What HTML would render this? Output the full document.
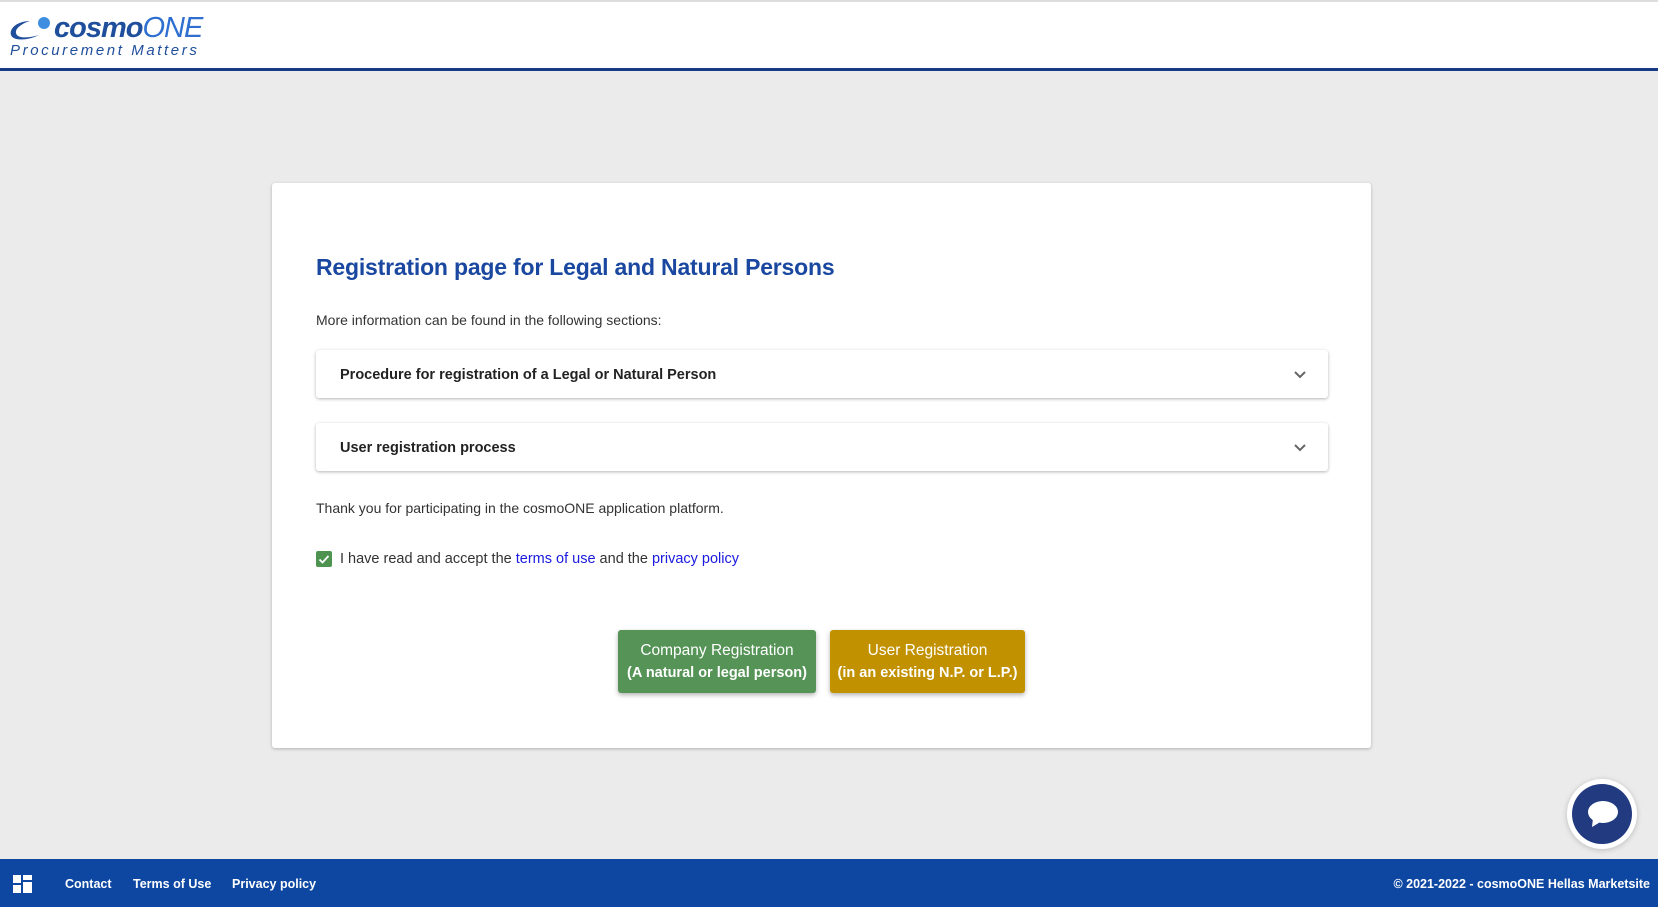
<!DOCTYPE html>
<html><head><meta charset="utf-8"><style>
*{box-sizing:border-box;margin:0;padding:0}
body{width:1658px;height:907px;overflow:hidden;background:#ebebeb;font-family:"Liberation Sans",Arial,sans-serif;position:relative;color:#222}
.hdr{position:absolute;left:0;top:0;width:1658px;height:71px;background:#fff;border-top:2px solid #ddd;border-bottom:3px solid #163a86}
.card{position:absolute;left:272px;top:183px;width:1099px;height:565px;background:#fff;border-radius:3px;box-shadow:0 1px 3px rgba(0,0,0,.25)}
.abs{position:absolute}
h1{position:absolute;left:44px;top:71px;font-size:23px;color:#1a47a0;font-weight:bold;letter-spacing:-0.2px}
.t{position:absolute;left:44px;font-size:14px;color:#333}
.acc{position:absolute;left:44px;width:1012px;height:48px;background:#fff;box-shadow:0 1px 3px rgba(0,0,0,.3);border-radius:3px;font-size:14.5px;font-weight:bold;color:#222;padding:17px 0 0 24px}
.acc svg{position:absolute;right:22px;top:21px}
.btn{position:absolute;top:447px;height:63px;color:#fff;text-align:center;border-radius:3px;box-shadow:0 2px 5px rgba(0,0,0,.3);font-size:15.5px;line-height:22px;padding-top:10px}
.btn b{font-size:14.5px}
.ftr{position:absolute;left:0;top:859px;width:1658px;height:48px;background:#0d47a1;color:#fff;font-size:12.5px;font-weight:bold}
.ftr span{position:absolute;top:18px}
a{color:#1a1ae0;text-decoration:none}
</style></head><body>
<div class="hdr">
<svg class="abs" style="left:8px;top:13px" width="44" height="30" viewBox="0 0 44 30"><path d="M22 6C10 6 1 13 3 20c2 6 16 6 28 0-10 3-22 4-23-2-1-5 7-10 14-12z" fill="#1f4e9c"/><circle cx="36" cy="8" r="6" fill="#3d8ee0"/></svg>
<div class="abs" style="left:54px;top:10px;font-size:29px;font-style:italic;color:#1f4e9c;letter-spacing:-1px"><b>cosmo</b><span style="color:#2e6fd0">ONE</span></div>
<div class="abs" style="left:10px;top:40px;font-size:15px;font-style:italic;color:#1f4e9c;letter-spacing:2.6px">Procurement Matters</div>
</div>
<div class="card">
<h1>Registration page for Legal and Natural Persons</h1>
<div class="t" style="top:129px">More information can be found in the following sections:</div>
<div class="acc" style="top:167px">Procedure for registration of a Legal or Natural Person<svg width="12" height="8" viewBox="0 0 12 8"><path d="M1 1l5 5 5-5" stroke="#666" stroke-width="2" fill="none"/></svg></div>
<div class="acc" style="top:240px">User registration process<svg width="12" height="8" viewBox="0 0 12 8"><path d="M1 1l5 5 5-5" stroke="#666" stroke-width="2" fill="none"/></svg></div>
<div class="t" style="top:317px">Thank you for participating in the cosmoONE application platform.</div>
<div class="abs" style="left:44px;top:368px;width:16px;height:16px;background:#4e9450;border-radius:2px"><svg width="16" height="16" viewBox="0 0 16 16"><path d="M3.5 8.5l3 3 6-6.5" stroke="#fff" stroke-width="1.8" fill="none"/></svg></div>
<div class="t" style="left:68px;top:368px;font-size:14.5px">I have read and accept the <a>terms of use</a> and the <a>privacy policy</a></div>
<div class="btn" style="left:346px;width:198px;background:#559456">Company Registration<br><b>(A natural or legal person)</b></div>
<div class="btn" style="left:558px;width:195px;background:#c29100">User Registration<br><b>(in an existing N.P. or L.P.)</b></div>
</div>
<div class="abs" style="left:1567px;top:779px;width:70px;height:70px;border-radius:50%;background:#fff;box-shadow:0 1px 6px rgba(0,0,0,.2)"><div style="position:absolute;left:5px;top:5px;width:60px;height:60px;border-radius:50%;background:#223a80"><svg style="position:absolute;left:15px;top:16px" width="32" height="30" viewBox="0 0 32 30"><ellipse cx="16" cy="12" rx="15" ry="11" fill="#fff"/><path d="M6 18l-1 9 10-6z" fill="#fff"/></svg></div></div>
<div class="ftr">
<svg class="abs" style="left:13px;top:16px" width="19" height="18" viewBox="0 0 19 18"><rect x="0" y="0" width="8" height="8" fill="#fff"/><rect x="0" y="10" width="8" height="8" fill="#fff"/><rect x="10" y="0" width="9" height="5" fill="#fff"/><rect x="10" y="7" width="9" height="11" fill="#fff"/></svg>
<span style="left:65px">Contact</span><span style="left:133px">Terms of Use</span><span style="left:232px">Privacy policy</span>
<span style="right:8px">© 2021-2022 - cosmoONE Hellas Marketsite</span>
</div>
</body></html>
